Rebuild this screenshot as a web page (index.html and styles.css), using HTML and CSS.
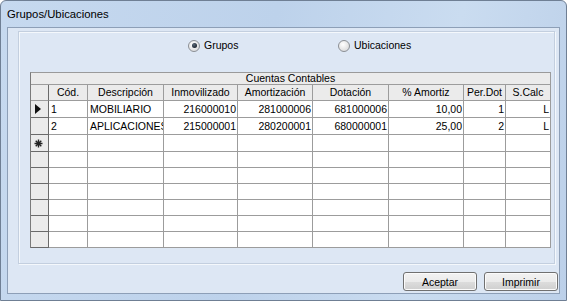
FILE: index.html
```html
<!DOCTYPE html>
<html lang="es">
<head>
    <meta charset="UTF-8">
    <title>Grupos/Ubicaciones</title>
    <link rel="stylesheet" href="styles.css">
</head>
<body>
    <div class="ventana">
        <div class="titulo">Grupos/Ubicaciones</div>

        <div class="cliente">
            <div class="marco">
                <div class="opciones">
                    <label class="opcion"><span class="radio marcado"></span>Grupos</label>
                    <label class="opcion"><span class="radio"></span>Ubicaciones</label>
                </div>

                <div class="rejilla">
                    <div class="banda">Cuentas Contables</div>

                    <!-- cabeceras -->
                    <div class="ind cab"></div>
                    <div class="cab">Cód.</div>
                    <div class="cab">Descripción</div>
                    <div class="cab">Inmovilizado</div>
                    <div class="cab">Amortización</div>
                    <div class="cab">Dotación</div>
                    <div class="cab">% Amortiz</div>
                    <div class="cab">Per.Dot</div>
                    <div class="cab">S.Calc</div>

                    <!-- fila 1 -->
                    <div class="ind"><span class="flecha"></span></div>
                    <div class="celda">1</div>
                    <div class="celda">MOBILIARIO</div>
                    <div class="celda num">216000010</div>
                    <div class="celda num">281000006</div>
                    <div class="celda num">681000006</div>
                    <div class="celda num">10,00</div>
                    <div class="celda num">1</div>
                    <div class="celda num">L</div>

                    <!-- fila 2 -->
                    <div class="ind"></div>
                    <div class="celda">2</div>
                    <div class="celda">APLICACIONES</div>
                    <div class="celda num">215000001</div>
                    <div class="celda num">280200001</div>
                    <div class="celda num">680000001</div>
                    <div class="celda num">25,00</div>
                    <div class="celda num">2</div>
                    <div class="celda num">L</div>

                    <!-- fila nueva -->
                    <div class="ind">
                        <svg class="estrella" width="9" height="9" viewBox="0 0 9 9">
                            <path d="M4.5 0.5V8.5M0.5 4.5H8.5M1.7 1.7L7.3 7.3M7.3 1.7L1.7 7.3" stroke="#222" stroke-width="1.4"/>
                        </svg>
                    </div>
                    <div class="celda"></div><div class="celda"></div><div class="celda"></div><div class="celda"></div>
                    <div class="celda"></div><div class="celda"></div><div class="celda"></div><div class="celda"></div>

                    <div class="ind"></div>
                    <div class="celda"></div><div class="celda"></div><div class="celda"></div><div class="celda"></div>
                    <div class="celda"></div><div class="celda"></div><div class="celda"></div><div class="celda"></div>

                    <div class="ind"></div>
                    <div class="celda"></div><div class="celda"></div><div class="celda"></div><div class="celda"></div>
                    <div class="celda"></div><div class="celda"></div><div class="celda"></div><div class="celda"></div>

                    <div class="ind"></div>
                    <div class="celda"></div><div class="celda"></div><div class="celda"></div><div class="celda"></div>
                    <div class="celda"></div><div class="celda"></div><div class="celda"></div><div class="celda"></div>

                    <div class="ind"></div>
                    <div class="celda"></div><div class="celda"></div><div class="celda"></div><div class="celda"></div>
                    <div class="celda"></div><div class="celda"></div><div class="celda"></div><div class="celda"></div>

                    <div class="ind"></div>
                    <div class="celda"></div><div class="celda"></div><div class="celda"></div><div class="celda"></div>
                    <div class="celda"></div><div class="celda"></div><div class="celda"></div><div class="celda"></div>

                    <div class="ind"></div>
                    <div class="celda"></div><div class="celda"></div><div class="celda"></div><div class="celda"></div>
                    <div class="celda"></div><div class="celda"></div><div class="celda"></div><div class="celda"></div>
                </div>
            </div>

            <div class="botones">
                <button type="button">Aceptar</button>
                <button type="button">Imprimir</button>
            </div>
        </div>
    </div>
</body>
</html>
```

FILE: styles.css
```css
* {
    box-sizing: border-box;
    margin: 0;
    padding: 0;
}

body {
    background-color: #ffffff;
    font-family: "Liberation Sans", Arial, sans-serif;
    font-size: 10.5px;
    color: #000000;
}

.ventana {
    width: 567px;
    height: 301px;
    border: 1px solid #6f7f94;
    border-radius: 6px 6px 0 0;
    background: linear-gradient(100deg, #c6d9ef 0%, #bdd2eb 45%, #cadcf0 75%, #bcd0e9 100%);
    display: flex;
    flex-direction: column;
}

.titulo {
    height: 26px;
    padding: 6px 0 0 6px;
    font-size: 11.3px;
    line-height: 14px;
}

.cliente {
    flex: 1;
    margin: 0 6px 6px 6px;
    border: 1px solid #8d9fb7;
    background-color: #dde7f4;
    display: flex;
    flex-direction: column;
}

.marco {
    margin: 3px 4px 0 10px;
    border: 1px solid #c3cfdf;
    box-shadow: 1px 1px 0 #f4f8fc, inset 1px 1px 0 #f4f8fc;
    padding: 7px 0 15px 11px;
}

/* radios */
.opciones {
    display: flex;
    padding-left: 158px;
    height: 13px;
}

.opcion {
    width: 150px;
    display: flex;
    align-items: center;
    gap: 4px;
    line-height: 13px;
}

.radio {
    width: 12px;
    height: 12px;
    border-radius: 50%;
    border: 1px solid #8b8f94;
    background: radial-gradient(circle at 40% 35%, #ffffff 0%, #e6e6e6 55%, #cfd3d8 100%);
    display: flex;
    align-items: center;
    justify-content: center;
}

.radio.marcado::after {
    content: "";
    width: 5px;
    height: 5px;
    border-radius: 50%;
    background: radial-gradient(circle at 40% 35%, #5d6b7a 0%, #151d26 80%);
}

/* rejilla */
.rejilla {
    margin-top: 20px;
    width: 521px;
    display: grid;
    grid-template-columns: 18px 39px 76px 74px 75px 76px 75px 42px 45px;
    grid-template-rows: 12px 16px 17px 17px 17px repeat(6, 16px);
    border-left: 1px solid #7a7a7a;
    border-top: 1px solid #9a9a9a;
    background-color: #ffffff;
}

.rejilla > div {
    border-right: 1px solid #9c9c9c;
    border-bottom: 1px solid #9c9c9c;
    white-space: nowrap;
    overflow: hidden;
}

.banda {
    grid-column: 1 / -1;
    background-color: #ebebeb;
    text-align: center;
    line-height: 11px;
}

.cab {
    background-color: #ebebeb;
    text-align: center;
    line-height: 15px;
}

.rejilla > .ind {
    background-color: #ebebeb;
    border-right-color: #6a6a6a;
    border-bottom-color: #6a6a6a;
    display: flex;
    align-items: center;
    justify-content: center;
}

.rejilla > .ind.cab {
    border-bottom-color: #9c9c9c;
}

.celda {
    padding: 0 2px;
    line-height: 16px;
}

.celda.num {
    text-align: right;
    padding-right: 1px;
}

.flecha {
    width: 0;
    height: 0;
    border-top: 5px solid transparent;
    border-bottom: 5px solid transparent;
    border-left: 6px solid #111111;
    margin-left: -3px;
}

.estrella {
    display: block;
    margin-left: -3px;
}

/* botones */
.botones {
    display: flex;
    justify-content: flex-end;
    gap: 7px;
    margin-top: 8px;
    padding-right: 1px;
}

.botones button {
    width: 74px;
    height: 19px;
    border: 1px solid #707070;
    border-radius: 3px;
    background: linear-gradient(#f2f2f2 0%, #ebebeb 50%, #dddddd 51%, #cfcfcf 100%);
    box-shadow: inset 0 0 0 1px #fbfbfb;
    font-family: "Liberation Sans", Arial, sans-serif;
    font-size: 10.5px;
    color: #000000;
}
```
